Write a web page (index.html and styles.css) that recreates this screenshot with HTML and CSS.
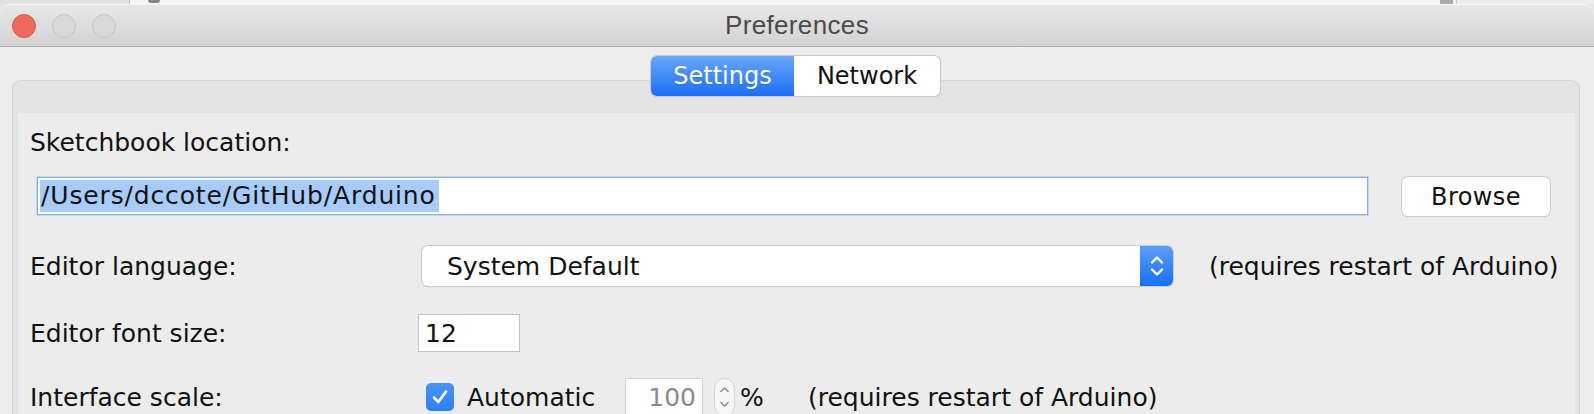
FILE: index.html
```html
<!DOCTYPE html>
<html lang="en">
<head>
<meta charset="utf-8">
<title>Preferences</title>
<link rel="stylesheet" href="styles.css">
</head>
<body>
<div class="desk">
  <div class="desk-a"></div>
  <div class="desk-b"><span class="desk-glyph"></span></div>
  <div class="desk-c"></div>
  <div class="desk-d"></div>
</div>
<div class="window">
  <div class="titlebar">
    <div class="lights">
      <span class="light close"></span>
      <span class="light"></span>
      <span class="light"></span>
    </div>
    <div class="title">Preferences</div>
    <div></div>
  </div>
  <div class="win-body">
    <div class="tabs">
      <div class="seg">
        <div class="seg-item active">Settings</div>
        <div class="seg-item">Network</div>
      </div>
    </div>
    <div class="panel">
      <div class="content">
        <div class="label-top">Sketchbook location:</div>
        <div class="path-row">
          <div class="field path"><span class="sel">/Users/dccote/GitHub/Arduino</span></div>
          <div class="button">Browse</div>
        </div>
        <div class="row row-lang">
          <div class="label">Editor language:</div>
          <div class="select">
            <span class="select-text">System Default</span>
            <span class="stepper">
              <svg width="18" height="26" viewBox="0 0 18 26"><path d="M4 9.5 L9 4.5 L14 9.5 M4 16.5 L9 21.5 L14 16.5" fill="none" stroke="#fff" stroke-width="2.4" stroke-linecap="round" stroke-linejoin="round"/></svg>
            </span>
          </div>
          <div class="note note-lang">(requires restart of Arduino)</div>
        </div>
        <div class="row row-font">
          <div class="label">Editor font size:</div>
          <div class="field size">12</div>
        </div>
        <div class="row row-scale">
          <div class="label">Interface scale:</div>
          <span class="check">
            <svg width="28" height="28" viewBox="0 0 28 28"><path d="M8 14.5 L12.3 19 L20 8.5" fill="none" stroke="#fff" stroke-width="2.6" stroke-linecap="round" stroke-linejoin="round"/></svg>
          </span>
          <span class="auto">Automatic</span>
          <div class="field scale">100</div>
          <span class="spin">
            <svg width="21" height="38" viewBox="0 0 21 38"><path d="M6.5 13 L10.5 9 L14.5 13 M6.5 25 L10.5 29 L14.5 25" fill="none" stroke="#8d8d8d" stroke-width="1.6" stroke-linecap="round" stroke-linejoin="round"/></svg>
          </span>
          <span class="pct">%</span>
          <span class="note note-scale">(requires restart of Arduino)</span>
        </div>
      </div>
    </div>
  </div>
</div>
</body>
</html>
```
FILE: styles.css
```css
* { box-sizing: border-box; }
html, body {
  margin: 0;
  padding: 0;
  height: 414px;
  overflow: hidden;
}
body {
  background: #e6e6e6;
  font-family: "DejaVu Sans", "Noto Sans", sans-serif;
  color: #111;
}

/* strip of the window behind */
.desk {
  display: flex;
  height: 4px;
}
.desk-a { width: 130px; background: #e2e2e2; border-right: 1px solid #bdbdbd; }
.desk-b { width: 1310px; background: #f7f7f7; display: flex; }
.desk-glyph { width: 12px; height: 3px; margin-left: 18px; background: #7d8a88; border-radius: 0 0 4px 4px; }
.desk-c { width: 16px; background: #a8a8a8; border-right: 3px solid #f1f1f1; }
.desk-d { flex: 1; background: #ececec; border-left: 1px solid #c8c8c8; }

.window {
  background: #ededed;
  border-radius: 10px 10px 0 0;
  height: 410px;
  overflow: hidden;
}

.titlebar {
  height: 43px;
  display: grid;
  grid-template-columns: 1fr auto 1fr;
  align-items: center;
  background: linear-gradient(#e9e9e9, #d2d2d2);
  border-bottom: 1px solid #aeaeae;
  border-radius: 10px 10px 0 0;
  box-shadow: inset 0 1px 0 #f4f4f4;
}
.lights {
  display: flex;
  gap: 16px;
  padding-left: 12px;
  padding-top: 1px;
}
.light {
  width: 24px;
  height: 24px;
  border-radius: 50%;
  background: #d9d9d9;
  border: 1px solid #c3c3c3;
}
.light.close {
  background: #ee6a5e;
  border-color: #d9564b;
}
.title {
  font-family: "Liberation Sans", Arial, sans-serif;
  font-size: 26px;
  letter-spacing: 0.35px;
  color: #4b4b4b;
  padding-top: 1px;
}

.win-body {
  padding-top: 9px;
}
.tabs {
  display: flex;
  justify-content: center;
  position: relative;
  z-index: 1;
  padding-right: 3px;
}
.seg {
  display: flex;
  height: 40px;
  border-radius: 6px;
  box-shadow: 0 0 0 1px #c9c9c9, 0 1px 1px rgba(0,0,0,0.18);
  overflow: hidden;
  background: #fff;
}
.seg-item {
  display: flex;
  align-items: center;
  justify-content: center;
  font-size: 24px;
  color: #111;
  width: 146px;
}
.seg-item.active {
  width: 143px;
  color: #fff;
  background: linear-gradient(#6aa6f9, #1b6ff5);
  text-shadow: 0 1px 0 rgba(0,0,0,0.12);
}

.panel {
  margin: -16px 14px 0 12px;
  background: #e3e3e3;
  border: 1px solid #d6d6d6;
  border-radius: 8px 8px 0 0;
  padding: 32px 4px 0 5px;
  height: 340px;
}
.content {
  background: #ececec;
  height: 100%;
  padding: 15px 0 0 12px;
  font-size: 25px;
}
.label-top {
  line-height: 30px;
  height: 30px;
}

.path-row {
  display: flex;
  align-items: flex-start;
  margin-top: 19px;
}
.field {
  background: #fff;
  height: 38px;
  display: flex;
  align-items: center;
}
.path {
  margin-left: 7px;
  width: 1331px;
  border: 1px solid #83aee9;
  box-shadow: 0 0 0 1px #c2d7f3;
  padding-left: 2px;
}
.sel {
  background: #a7ccfb;
  height: 32px;
  line-height: 32px;
  padding: 0 3px 0 1px;
  letter-spacing: 0.85px;
}
.button {
  margin-left: 34px;
  width: 148px;
  height: 39px;
  background: #fff;
  border-radius: 6px;
  box-shadow: 0 0 0 1px #cdcdcd, 0 1px 1px rgba(0,0,0,0.2);
  display: flex;
  align-items: center;
  justify-content: center;
  font-size: 24px;
  letter-spacing: 0.4px;
}

.row {
  display: flex;
  align-items: center;
}
.label {
  width: 388px;
  flex: none;
}
.row-lang {
  margin-top: 30px;
  height: 40px;
}
.select {
  margin-left: 4px;
  width: 751px;
  height: 40px;
  display: flex;
  align-items: center;
  background: #fff;
  border-radius: 6px;
  box-shadow: 0 0 0 1px #cbcbcb, 0 1px 1px rgba(0,0,0,0.15);
  overflow: hidden;
}
.select-text {
  flex: 1;
  padding-left: 25px;
}
.stepper {
  width: 33px;
  height: 100%;
  display: flex;
  align-items: center;
  justify-content: center;
  background: linear-gradient(#5d9df8, #186ef5);
}
.note-lang {
  margin-left: 36px;
}

.row-font {
  margin-top: 28px;
  height: 38px;
}
.size {
  width: 102px;
  border: 1px solid #c2c2c2;
  padding-left: 6px;
}

.row-scale {
  margin-top: 26px;
  height: 38px;
}
.check {
  margin-left: 8px;
  width: 28px;
  height: 28px;
  border-radius: 5px;
  background: linear-gradient(#4c93f8, #2f7ff6);
  display: flex;
}
.auto {
  margin-left: 13px;
  width: 158px;
}
.scale {
  width: 78px;
  border: 1px solid #d4d4d4;
  justify-content: flex-end;
  padding-right: 6px;
  color: #8a8a8a;
}
.spin {
  margin-left: 11px;
  width: 21px;
  height: 38px;
  border-radius: 11px;
  border: 1px solid #d6d6d6;
  background: #f6f6f6;
  display: flex;
  align-items: center;
  justify-content: center;
}
.pct {
  margin-left: 5px;
  width: 18px;
  letter-spacing: -3px;
}
.note-scale {
  margin-left: 50px;
}
```
